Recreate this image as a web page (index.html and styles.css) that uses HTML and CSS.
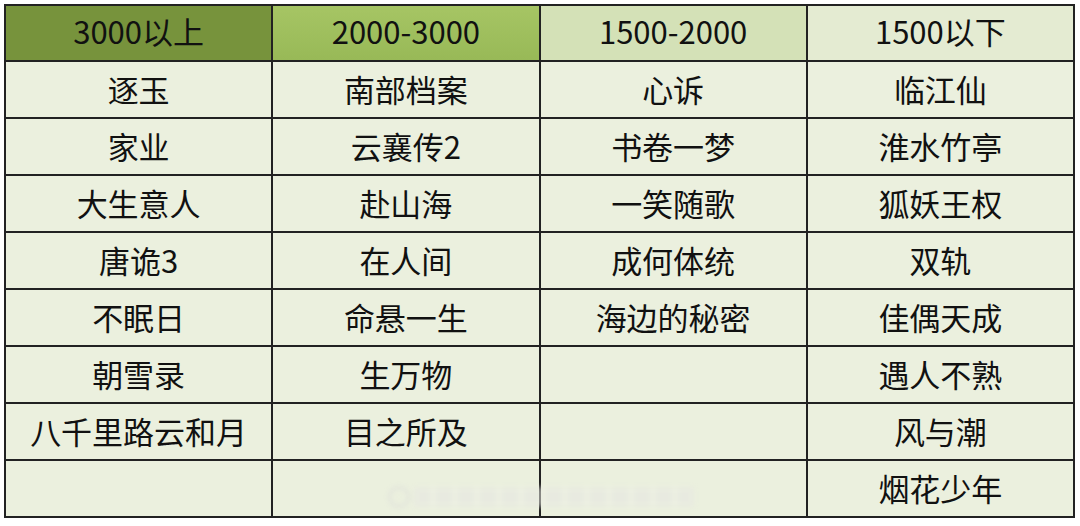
FILE: index.html
```html
<!DOCTYPE html>
<html lang="zh">
<head>
<meta charset="utf-8">
<link rel="stylesheet" href="styles.css">
</head>
<body>
<div class="wrap">
<table class="grid">
  <thead>
    <tr>
      <th class="h1">3000以上</th>
      <th class="h2">2000-3000</th>
      <th class="h3">1500-2000</th>
      <th class="h4">1500以下</th>
    </tr>
  </thead>
  <tbody>
    <tr><td>逐玉</td><td>南部档案</td><td>心诉</td><td>临江仙</td></tr>
    <tr><td>家业</td><td>云襄传2</td><td>书卷一梦</td><td>淮水竹亭</td></tr>
    <tr><td>大生意人</td><td>赴山海</td><td>一笑随歌</td><td>狐妖王权</td></tr>
    <tr><td>唐诡3</td><td>在人间</td><td>成何体统</td><td>双轨</td></tr>
    <tr><td>不眠日</td><td>命悬一生</td><td>海边的秘密</td><td>佳偶天成</td></tr>
    <tr><td>朝雪录</td><td>生万物</td><td></td><td>遇人不熟</td></tr>
    <tr><td>八千里路云和月</td><td>目之所及</td><td></td><td>风与潮</td></tr>
    <tr><td></td><td></td><td></td><td>烟花少年</td></tr>
  </tbody>
</table>
<div class="watermark">
  <span class="wm-logo"></span>
  <span class="wm-text"></span>
</div>
</div>
</body>
</html>
```
FILE: styles.css
```css
html, body {
  margin: 0;
  padding: 0;
  background: #ffffff;
}
body {
  padding: 4px 0 0 4px;
  font-family: "Noto Sans CJK SC", "Noto Sans", sans-serif;
  color: #111;
}
.wrap {
  position: relative;
  width: 1071px;
}
.grid {
  border-collapse: collapse;
  table-layout: fixed;
  width: 1071px;
}
.grid th,
.grid td {
  border: 2px solid #222;
  text-align: center;
  vertical-align: middle;
  padding: 0 0 2px 0;
  font-size: 31px;
  font-weight: 400;
  line-height: 1;
}
.grid th {
  height: 49px;
  padding-bottom: 5px;
}
.grid td {
  height: 53px;
  background: #ebf0de;
}
.h1 { background: #77933c; }
.h2 { background: linear-gradient(#a6c564, #98b957); }
.h3 { background: #d4e1b7; }
.h4 { background: #e4ebd2; }
.watermark {
  position: absolute;
  left: 384px;
  top: 482px;
  display: flex;
  align-items: center;
  gap: 4px;
  opacity: 0.5;
  filter: blur(2.5px);
}
.wm-logo {
  width: 22px;
  height: 22px;
  border-radius: 50%;
  border: 3px solid #d8d8d8;
  box-sizing: border-box;
}
.wm-text {
  width: 280px;
  height: 20px;
  background: repeating-linear-gradient(90deg, #e6e6e2 0 16px, #eef0e6 16px 22px);
}
```
